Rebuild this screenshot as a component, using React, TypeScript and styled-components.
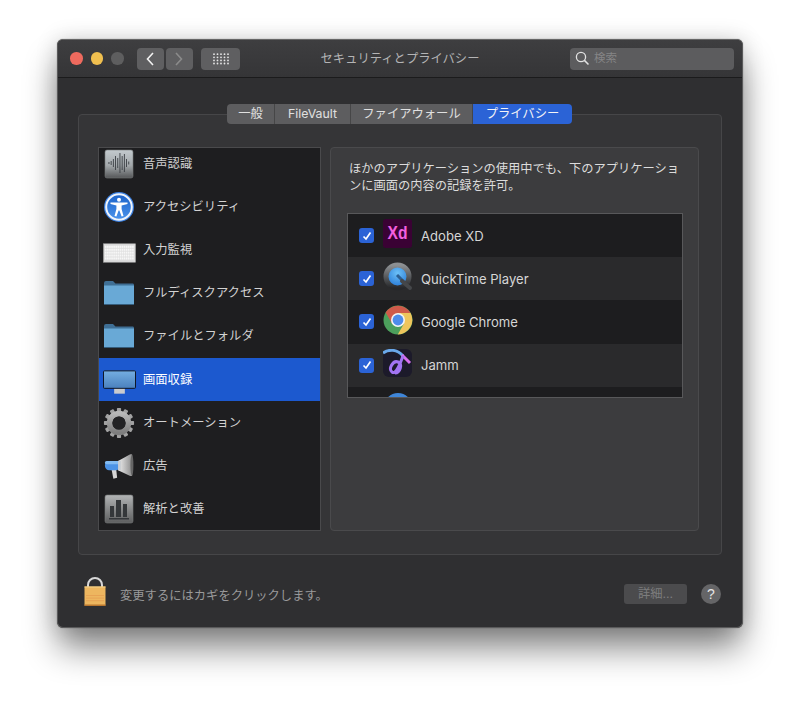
import styled, { createGlobalStyle } from 'styled-components';

const GlobalStyle = createGlobalStyle`
  html, body {
    margin: 0;
    background: #fff;
  }
  body {
    font-family: "Inter", "Noto Sans CJK JP", sans-serif;
    -webkit-font-smoothing: antialiased;
  }
`;

const VoiceIcon = () => (
  <svg width="30" height="30" viewBox="0 0 30 30">
    <defs>
      <linearGradient id="voiceBg" x1="0" y1="0" x2="0" y2="1">
        <stop offset="0" stopColor="#c3cace" />
        <stop offset="0.55" stopColor="#a3a8ab" />
        <stop offset="1" stopColor="#555759" />
      </linearGradient>
    </defs>
    <rect x="1" y="1" width="28" height="28" rx="2" fill="url(#voiceBg)" stroke="#77797b" strokeWidth="0.6" />
    {[4.5, 6.7, 8.9, 11.1, 13.3, 15.5, 17.7, 19.9, 22.1, 24.3].map((x, i) => {
      const h = [1, 2, 4, 7, 5, 10, 7, 9, 4, 1.5][i];
      return <rect key={x} x={x} y={14 - h} width="0.9" height={h * 2} fill="#3a3f44" />;
    })}
  </svg>
);

const AccessIcon = () => (
  <svg width="32" height="32" viewBox="0 0 32 32">
    <defs>
      <linearGradient id="accessBg" x1="0" y1="0" x2="0" y2="1">
        <stop offset="0" stopColor="#1c62c8" />
        <stop offset="1" stopColor="#4a93ec" />
      </linearGradient>
    </defs>
    <circle cx="16" cy="16" r="15" fill="#3a7fe0" />
    <circle cx="16" cy="16" r="12.8" fill="url(#accessBg)" stroke="#eef3fa" strokeWidth="2" />
    <circle cx="16" cy="8.8" r="2" fill="#fff" />
    <path
      d="M7.5 11.5 L24.5 11.5 L24.5 13 L18.6 14.4 L18.6 18 L20.5 25 L18.6 25.4 L16.4 19.5 L15.6 19.5 L13.4 25.4 L11.5 25 L13.4 18 L13.4 14.4 L7.5 13 Z"
      fill="#fff"
    />
  </svg>
);

const KeyboardIcon = () => (
  <svg width="33" height="20" viewBox="0 0 34 20">
    <rect x="0.5" y="0.5" width="33" height="19" fill="#dcdcdc" stroke="#a5a5a5" strokeWidth="0.6" />
    {[0, 1, 2, 3, 4].map((r) =>
      Array.from({ length: 14 }).map((_, c) => (
        <rect key={`${r}-${c}`} x={2 + c * 2.15} y={2.5 + r * 3} width="1.7" height="2.2" fill="#f7f7f7" />
      )),
    )}
  </svg>
);

const FolderIcon = () => (
  <svg width="32" height="26" viewBox="0 0 32 26">
    <path d="M1 3 Q1 1 3 1 L10 1 L12.5 3.5 L30 3.5 Q31 3.5 31 5 L31 10 L1 10 Z" fill="#3f6f95" />
    <path d="M1 5.5 L31 5.5 L31 24 Q31 25 30 25 L2 25 Q1 25 1 24 Z" fill="#69a9d6" />
    <rect x="1" y="24" width="30" height="1" fill="#355d7c" />
  </svg>
);

const MonitorIcon = () => (
  <svg width="33" height="26" viewBox="0 0 34 26">
    <defs>
      <linearGradient id="screenBg" x1="0" y1="0" x2="0" y2="1">
        <stop offset="0" stopColor="#74aee2" />
        <stop offset="1" stopColor="#4a80bd" />
      </linearGradient>
    </defs>
    <rect x="11.5" y="18" width="11" height="6" fill="#c9cbce" />
    <rect x="0.5" y="0.5" width="33" height="18" rx="1" fill="url(#screenBg)" stroke="#0d1422" strokeWidth="1" />
  </svg>
);

const GearIcon = () => {
  const teeth = Array.from({ length: 12 }).map((_, i) => i * 30);
  return (
    <svg width="32" height="32" viewBox="0 0 34 34">
      <defs>
        <linearGradient id="gearBg" x1="0" y1="0" x2="0" y2="1">
          <stop offset="0" stopColor="#b8b8b8" />
          <stop offset="1" stopColor="#7e7e7e" />
        </linearGradient>
      </defs>
      {teeth.map((deg) => (
        <rect key={deg} x="14.8" y="1" width="4.4" height="8" rx="0.8" fill="#a2a2a2" transform={`rotate(${deg} 17 17)`} />
      ))}
      <circle cx="17" cy="17" r="10" fill="none" stroke="url(#gearBg)" strokeWidth="6" />
      <circle cx="17" cy="17" r="7" fill="#232325" />
    </svg>
  );
};

const MegaphoneIcon = () => (
  <svg width="30" height="27" viewBox="0 0 32 28">
    <defs>
      <linearGradient id="hornBg" x1="0" y1="0" x2="1" y2="0">
        <stop offset="0" stopColor="#efefef" />
        <stop offset="1" stopColor="#8c8c8c" />
      </linearGradient>
    </defs>
    <path d="M8 17 L13 17 L14 26 L10 27 Z" fill="#d5d5d5" />
    <path d="M15 8 L28 1 L30 1 L30 24 L28 24 L15 18 Z" fill="url(#hornBg)" />
    <rect x="1" y="8" width="16" height="10" rx="4.5" fill="#4c93e6" />
    <rect x="1" y="8" width="16" height="3.5" rx="1.7" fill="#82bbf2" />
    <rect x="15" y="8" width="3" height="10" fill="#c9cdd2" />
    <ellipse cx="29.8" cy="12.5" rx="1.6" ry="11" fill="#666" />
  </svg>
);

const ChartIcon = () => (
  <svg width="30" height="30" viewBox="0 0 30 30">
    <defs>
      <linearGradient id="chartBg" x1="0" y1="0" x2="0" y2="1">
        <stop offset="0" stopColor="#b2b4b5" />
        <stop offset="1" stopColor="#5d5e5f" />
      </linearGradient>
    </defs>
    <rect x="1" y="1" width="28" height="28" rx="2" fill="url(#chartBg)" stroke="#77797b" strokeWidth="0.6" />
    <rect x="6" y="12" width="4" height="11" fill="#34373a" />
    <rect x="12" y="6" width="5" height="17" fill="#34373a" />
    <rect x="19" y="10" width="4" height="13" fill="#34373a" />
    <rect x="5" y="24" width="20" height="1.5" fill="#34373a" />
  </svg>
);

const XdIcon = () => (
  <svg width="30" height="30" viewBox="0 0 30 30">
    <rect width="29" height="29" x="0" y="0" rx="3" fill="#3a0234" />
    <text
      x="14.5"
      y="20"
      textAnchor="middle"
      textLength="20"
      lengthAdjust="spacingAndGlyphs"
      fontFamily="'Liberation Sans', sans-serif"
      fontWeight="700"
      fontSize="19"
      fill="#f25fe0"
    >
      Xd
    </text>
  </svg>
);

const QuickTimeIcon = () => (
  <svg width="30" height="30" viewBox="0 0 30 30">
    <defs>
      <radialGradient id="qtBlue" cx="0.5" cy="0.35" r="0.7">
        <stop offset="0" stopColor="#6cc0f7" />
        <stop offset="1" stopColor="#1d6fd2" />
      </radialGradient>
      <linearGradient id="qtRing" x1="0" y1="0" x2="0" y2="1">
        <stop offset="0" stopColor="#8d9093" />
        <stop offset="1" stopColor="#26272a" />
      </linearGradient>
    </defs>
    <circle cx="14.5" cy="14.5" r="11.5" fill="url(#qtBlue)" stroke="url(#qtRing)" strokeWidth="5" />
    <path d="M14 13 L21 20" stroke="#2c5f92" strokeWidth="3" />
    <path d="M19 19 L27 26" stroke="#45474a" strokeWidth="4" strokeLinecap="round" />
  </svg>
);

const ChromeIcon = () => (
  <svg width="30" height="30" viewBox="0 0 30 30">
    <circle cx="15" cy="15" r="14.5" fill="#4c9f5c" />
    <path d="M2.64 7.59 A14.5 14.5 0 0 1 27.6 8 L15 8 L8.94 18.5 Z" fill="#cf5a4a" />
    <path d="M27.6 8 A14.5 14.5 0 0 1 14.76 29.41 L21.06 18.5 L15 8 Z" fill="#eec55c" />
    <circle cx="15" cy="15" r="7" fill="#f4f4f4" />
    <circle cx="15" cy="15" r="5.4" fill="#4e8cea" />
  </svg>
);

const JammIcon = () => (
  <svg width="30" height="30" viewBox="0 0 30 30">
    <rect width="29" height="28" x="0" y="0" rx="6" fill="#1c1a2a" />
    <path d="M0 4 C6 0 14 0 20 7" fill="none" stroke="#6aa8ea" strokeWidth="3" />
    <path d="M19 6 C22 9 25 12 27 14" fill="none" stroke="#d76ff0" strokeWidth="3" />
    <path d="M20 7 C17 15 13 26 9 23 C5 20 10 11 15 13 C20 15 17 24 12 24" fill="none" stroke="#a274f2" strokeWidth="3" />
  </svg>
);

const LockIcon = () => (
  <svg width="24" height="30" viewBox="0 0 24 30">
    <path d="M5 11 L5 8 A7 7 0 0 1 19 8 L19 11" fill="none" stroke="#d8d8d8" strokeWidth="2" />
    <rect x="1.5" y="9.5" width="21" height="19" fill="#edb65f" />
    <rect x="1.5" y="9.5" width="21" height="1" fill="#f6d48c" />
    <rect x="1.5" y="27.5" width="21" height="1.5" fill="#b9762f" />
    {[0, 1, 2].map((r) =>
      Array.from({ length: 9 }).map((_, c) => (
        <rect key={`${r}-${c}`} x={3.5 + c * 2} y={18 + r * 2.6} width="1" height="1" fill="#e0904a" />
      )),
    )}
  </svg>
);

const services = [
  { label: '音声認識', icon: <VoiceIcon /> },
  { label: 'アクセシビリティ', icon: <AccessIcon /> },
  { label: '入力監視', icon: <KeyboardIcon />, drop: 3 },
  { label: 'フルディスクアクセス', icon: <FolderIcon /> },
  { label: 'ファイルとフォルダ', icon: <FolderIcon /> },
  { label: '画面収録', icon: <MonitorIcon />, selected: true, drop: 3 },
  { label: 'オートメーション', icon: <GearIcon /> },
  { label: '広告', icon: <MegaphoneIcon />, drop: 1 },
  { label: '解析と改善', icon: <ChartIcon /> },
];

const apps = [
  { name: 'Adobe XD', icon: <XdIcon /> },
  { name: 'QuickTime Player', icon: <QuickTimeIcon /> },
  { name: 'Google Chrome', icon: <ChromeIcon /> },
  { name: 'Jamm', icon: <JammIcon /> },
];

const tabs = [
  { label: '一般', width: 48 },
  { label: 'FileVault', width: 76 },
  { label: 'ファイアウォール', width: 122 },
  { label: 'プライバシー', width: 99, active: true },
];

export default function App() {
  return (
    <>
      <GlobalStyle />
      <Page>
        <Window>
          <TitleBar>
            <Lights>
              <Light $color="#ee6a5e" />
              <Light $color="#f0bf4f" />
              <Light $color="#5e5e5f" />
            </Lights>
            <NavGroup>
              <NavButton>
                <svg width="10" height="16" viewBox="0 0 10 16">
                  <path d="M8 2 L2.5 8 L8 14" fill="none" stroke="#f2f2f2" strokeWidth="1.6" />
                </svg>
              </NavButton>
              <NavButton>
                <svg width="10" height="16" viewBox="0 0 10 16">
                  <path d="M2 2 L7.5 8 L2 14" fill="none" stroke="#8b8b8b" strokeWidth="1.6" />
                </svg>
              </NavButton>
            </NavGroup>
            <GridButton>
              <svg width="16" height="12" viewBox="0 0 16 12">
                {[0, 1, 2, 3].map((r) =>
                  [0, 1, 2, 3, 4].map((c) => (
                    <circle key={`${r}${c}`} cx={1 + c * 3.5} cy={1.2 + r * 3.1} r="0.9" fill="#e6e6e6" />
                  )),
                )}
              </svg>
            </GridButton>
            <Title>セキュリティとプライバシー</Title>
            <SearchBox>
              <svg width="15" height="15" viewBox="0 0 15 15">
                <circle cx="6" cy="6" r="4.6" fill="none" stroke="#e2e2e2" strokeWidth="1.3" />
                <path d="M9.4 9.4 L13.5 13.5" stroke="#e2e2e2" strokeWidth="1.5" />
              </svg>
              <SearchText>検索</SearchText>
            </SearchBox>
          </TitleBar>

          <Content>
            <TabPanel>
              <TabBar>
                {tabs.map((tab) => (
                  <Tab key={tab.label} $active={!!tab.active} $width={tab.width}>
                    {tab.label}
                  </Tab>
                ))}
              </TabBar>
              <Columns>
                <Sidebar>
                  <SidebarInner>
                    {services.map((s) => (
                      <ServiceRow key={s.label} $selected={!!s.selected}>
                        <IconSlot $drop={s.drop ?? 0}>{s.icon}</IconSlot>
                        <ServiceLabel>{s.label}</ServiceLabel>
                      </ServiceRow>
                    ))}
                  </SidebarInner>
                </Sidebar>
                <DetailPanel>
                  <Description>
                    ほかのアプリケーションの使用中でも、下のアプリケーションに画面の内容の記録を許可。
                  </Description>
                  <AppList>
                    {apps.map((app, i) => (
                      <AppRow key={app.name} $odd={i % 2 === 1}>
                        <Checkbox>
                          <svg width="10" height="10" viewBox="0 0 10 10">
                            <path d="M1.5 5.5 L4 8 L8.5 1.5" fill="none" stroke="#fff" strokeWidth="1.7" />
                          </svg>
                        </Checkbox>
                        <AppIcon>{app.icon}</AppIcon>
                        <span>{app.name}</span>
                      </AppRow>
                    ))}
                    <ClippedIcon />
                  </AppList>
                </DetailPanel>
              </Columns>
            </TabPanel>

            <Footer>
              <LockSlot>
                <LockIcon />
              </LockSlot>
              <LockText>変更するにはカギをクリックします。</LockText>
              <DetailButton>詳細...</DetailButton>
              <HelpButton>?</HelpButton>
            </Footer>
          </Content>
        </Window>
      </Page>
    </>
  );
}

const Page = styled.div`
  width: 800px;
  height: 703px;
  padding: 39px 0 0 57px;
  box-sizing: border-box;
  overflow: hidden;
`;

const Window = styled.div`
  width: 686px;
  height: 589px;
  box-sizing: border-box;
  background: #2f2f31;
  border-radius: 6px;
  border: 1px solid #5a5a5b;
  border-top-color: #666;
  box-shadow: 0 0 1px rgba(0, 0, 0, 0.6), 0 22px 34px -2px rgba(0, 0, 0, 0.48), 0 0 22px rgba(0, 0, 0, 0.16);
  display: flex;
  flex-direction: column;
`;

const TitleBar = styled.div`
  height: 38px;
  flex: none;
  box-sizing: border-box;
  border-bottom: 1px solid #1b1b1c;
  border-radius: 5px 5px 0 0;
  background: linear-gradient(#3e3e40, #353537);
  display: flex;
  align-items: center;
  padding: 0 8px 0 12px;
  position: relative;
`;

const Lights = styled.div`
  display: flex;
  gap: 8px;
`;

const Light = styled.div<{ $color: string }>`
  width: 12.5px;
  height: 12.5px;
  border-radius: 50%;
  background: ${(p) => p.$color};
`;

const NavGroup = styled.div`
  display: flex;
  gap: 1.5px;
  margin-left: 13px;
`;

const NavButton = styled.div`
  width: 27.5px;
  height: 22px;
  background: #5f5f61;
  display: flex;
  align-items: center;
  justify-content: center;
  border-radius: 4px;
`;

const GridButton = styled(NavButton)`
  width: 39px;
  margin-left: 8px;
`;

const Title = styled.div`
  position: absolute;
  left: 0;
  right: 0;
  top: 10px;
  text-align: center;
  color: #b4b4b5;
  font-size: 12.3px;
  line-height: 18px;
`;

const SearchBox = styled.div`
  margin-left: auto;
  width: 164px;
  height: 22px;
  background: #5c5c5e;
  border-radius: 4px;
  display: flex;
  align-items: center;
  gap: 4px;
  padding-left: 5px;
  box-sizing: border-box;
  position: relative;
`;

const SearchText = styled.span`
  color: #858586;
  font-size: 11.5px;
  line-height: 20px;
  padding-bottom: 2px;
`;

const Content = styled.div`
  flex: 1;
  display: flex;
  flex-direction: column;
  padding: 36px 20px 0;
`;

const TabPanel = styled.div`
  height: 441px;
  box-sizing: border-box;
  background: #353537;
  border: 1px solid #464648;
  border-radius: 4px;
  position: relative;
`;

const TabBar = styled.div`
  position: absolute;
  top: -11px;
  left: 148px;
  display: flex;
  height: 20px;
  border-radius: 4px;
  overflow: hidden;
`;

const Tab = styled.div<{ $active: boolean; $width: number }>`
  box-sizing: border-box;
  width: ${(p) => p.$width}px;
  background: ${(p) => (p.$active ? '#2b63d6' : '#5d5d5f')};
  color: ${(p) => (p.$active ? '#f4f4f6' : '#e0e0e0')};
  font-size: 12.3px;
  line-height: 20px;
  text-align: center;
  border-right: 1px solid #464647;

  &:last-child {
    border-right: none;
  }
`;

const Columns = styled.div`
  display: flex;
  gap: 9px;
  padding: 32px 22px 0 19px;
`;

const Sidebar = styled.div`
  width: 223px;
  height: 384px;
  box-sizing: border-box;
  background: #1e1e20;
  border: 1px solid #4a4a4c;
  overflow: hidden;
`;

const SidebarInner = styled.div`
  margin-top: -5px;
`;

const ServiceRow = styled.div<{ $selected: boolean }>`
  height: 42.1px;
  margin-bottom: 1px;
  box-sizing: border-box;
  padding-left: 3px;
  display: flex;
  align-items: center;
  gap: 7px;
  background: ${(p) => (p.$selected ? '#1c59cf' : 'transparent')};
  color: ${(p) => (p.$selected ? '#fff' : '#d2d2d2')};
  font-size: 12.3px;
`;

const ServiceLabel = styled.span`
  padding-bottom: 2px;
`;

const IconSlot = styled.div<{ $drop: number }>`
  width: 34px;
  height: 34px;
  flex: none;
  display: flex;
  align-items: center;
  justify-content: center;
  padding-top: ${(p) => p.$drop * 2}px;
`;

const DetailPanel = styled.div`
  width: 369px;
  height: 384px;
  box-sizing: border-box;
  background: #3c3c3e;
  border: 1px solid #4a4a4c;
  border-radius: 4px;
  padding: 13px 16px 0;
`;

const Description = styled.div`
  color: #dcdcdc;
  font-size: 12.25px;
  line-height: 16.5px;
  width: 336px;
  margin: 0 0 19px 2px;
`;

const AppList = styled.div`
  height: 185px;
  width: 336px;
  box-sizing: border-box;
  background: #1d1d1f;
  border: 1px solid #58585a;
  overflow: hidden;
  position: relative;
`;

const AppRow = styled.div<{ $odd: boolean }>`
  height: 43.2px;
  display: flex;
  align-items: center;
  padding-left: 11px;
  background: ${(p) => (p.$odd ? '#2a2a2c' : '#1d1d1f')};
  color: #d6d6d6;
  font-size: 13.1px;
`;

const Checkbox = styled.div`
  width: 15px;
  height: 15px;
  border-radius: 3px;
  background: #2b63d6;
  display: flex;
  align-items: center;
  justify-content: center;
  flex: none;
`;

const AppIcon = styled.div`
  width: 30px;
  height: 30px;
  margin: -3px 8px 0 9px;
  flex: none;
`;

const ClippedIcon = styled.div`
  width: 28px;
  height: 28px;
  margin: 6px 0 0 36px;
  border-radius: 50%;
  background: #3f86d8;
`;

const Footer = styled.div`
  flex: 1;
  display: flex;
  align-items: center;
  padding: 6px 1px 0 5px;
`;

const LockSlot = styled.div`
  display: flex;
  flex: none;
  margin-top: -5px;
`;

const LockText = styled.span`
  color: #9a9a9b;
  font-size: 12.3px;
  margin: 2px 0 0 13px;
`;

const DetailButton = styled.div`
  margin-left: auto;
  width: 63px;
  height: 20px;
  border-radius: 3px;
  background: #4b4b4d;
  color: #7d7d7e;
  font-size: 12.3px;
  line-height: 20px;
  text-align: center;
`;

const HelpButton = styled.div`
  width: 20px;
  height: 20px;
  margin-left: 14px;
  border-radius: 50%;
  background: #656567;
  color: #e6e6e6;
  font-family: "Liberation Sans", sans-serif;
  font-size: 14px;
  line-height: 20px;
  text-align: center;
`;
